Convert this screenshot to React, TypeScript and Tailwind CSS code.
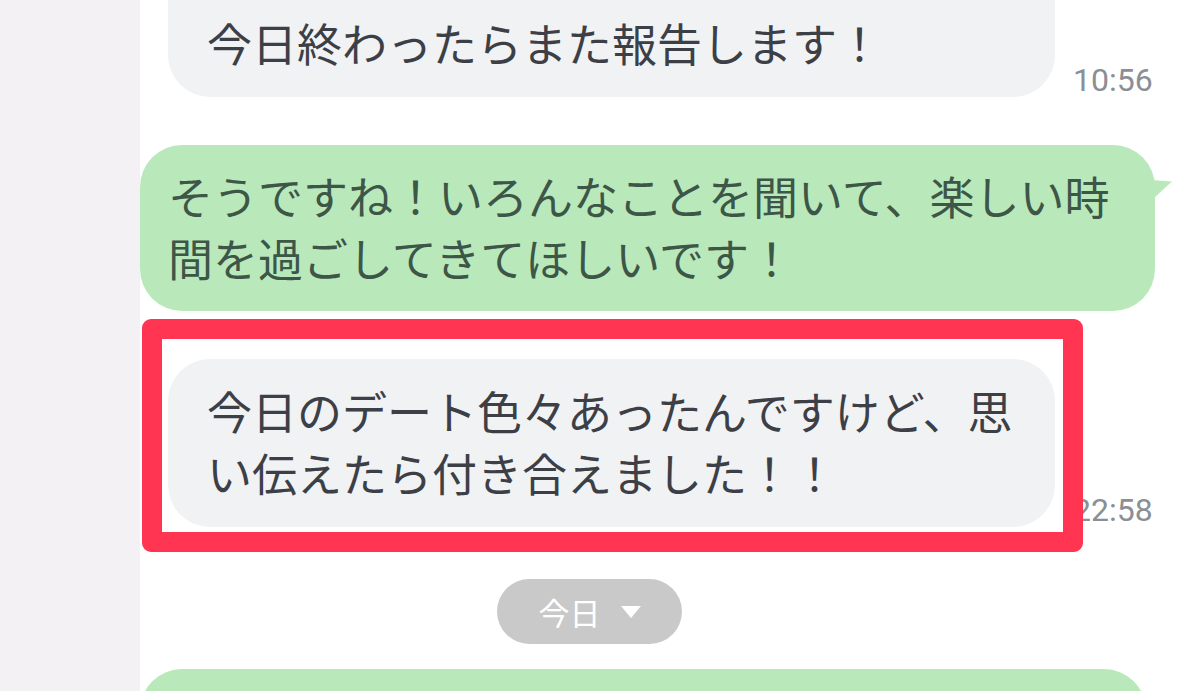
import React from "react";

const jp = { fontFamily: '"Noto Sans CJK JP", "Noto Sans", sans-serif' };
const num = { fontFamily: 'Roboto, "Liberation Sans", sans-serif' };

function Time({ value }: { value: string }) {
  return (
    <span
      style={num}
      className="mb-[1px] shrink-0 text-[32px] leading-none text-[#8b8f94]"
    >
      {value}
    </span>
  );
}

function Incoming({
  lines,
  time,
  hidden,
}: {
  lines: string[];
  time: string;
  hidden?: string;
}) {
  return (
    <div className="flex shrink-0 items-end gap-[18px] pl-[28px]">
      <div
        style={jp}
        className="w-[887px] shrink-0 rounded-[42px] bg-[#f1f2f4] pt-[21px] pb-[23px] pl-[39px] text-[45px] leading-[62px] text-[#3c4046]"
      >
        {hidden && <div className="mb-[6px] whitespace-nowrap">{hidden}</div>}
        {lines.map((l) => (
          <div key={l} className="whitespace-nowrap">
            {l}
          </div>
        ))}
      </div>
      <Time value={time} />
    </div>
  );
}

export default function App() {
  return (
    <div className="flex h-[691px] w-[1178px] overflow-hidden bg-white">
      <div className="w-[140px] shrink-0 bg-[#f4f1f5]" />

      <div className="-mt-[77px] flex flex-1 flex-col">
        <Incoming
          hidden="デートの前にちょっと緊張してます"
          lines={["今日終わったらまた報告します！"]}
          time="10:56"
        />

        <div className="relative mt-[48px] shrink-0">
          <div
            style={jp}
            className="w-[1015px] rounded-[42px] bg-[#b9e9bb] pt-[20px] pb-[22px] pl-[28px] text-[45px] leading-[62px] text-[#3d5647]"
          >
            <div className="whitespace-nowrap">
              そうですね！いろんなことを聞いて、楽しい時
            </div>
            <div className="whitespace-nowrap">間を過ごしてきてほしいです！</div>
          </div>
          <svg
            className="absolute left-[1011px] top-[35px]"
            width="22"
            height="18"
            viewBox="0 0 22 18"
          >
            <path d="M0 0 L21 1.5 L4 17 L0 17 Z" fill="#b9e9bb" />
          </svg>
        </div>

        <div className="relative mt-[48px] shrink-0">
          <Incoming
            lines={["今日のデート色々あったんですけど、思", "い伝えたら付き合えました！！"]}
            time="22:58"
          />
          <div className="pointer-events-none absolute left-[2px] top-[-40px] h-[233px] w-[941px] rounded-[9px] border-[20px] border-[#ff3552]" />
        </div>

        <div className="mt-[52px] ml-[357px] flex h-[65px] w-[185px] shrink-0 items-center justify-center gap-[20px] rounded-full bg-[#c9c9c9]">
          <span style={jp} className="text-[31px] leading-none text-white">
            今日
          </span>
          <svg width="20" height="12" viewBox="0 0 20 12">
            <path d="M0 0 H20 L10 12 Z" fill="#ffffff" />
          </svg>
        </div>

        <div className="mt-[25px] h-[80px] w-[1006px] shrink-0 rounded-t-[42px] bg-[#b9e9bb]" />
      </div>
    </div>
  );
}
